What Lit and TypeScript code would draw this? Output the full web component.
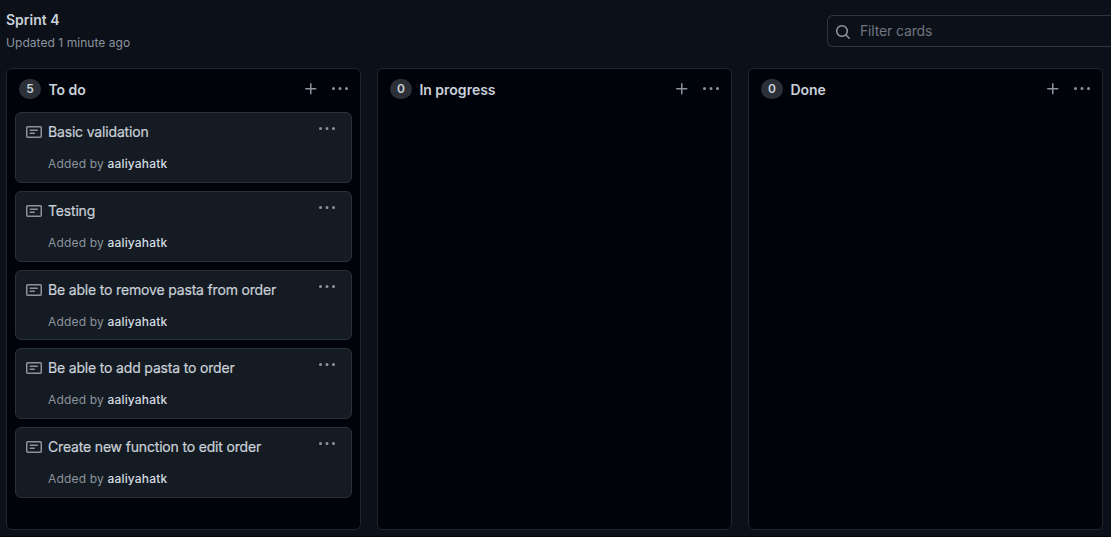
import { LitElement, html, css, svg } from "lit";
import { customElement, property } from "lit/decorators.js";

const PLUS = svg`<path d="M7.75 2a.75.75 0 01.75.75V7h4.25a.75.75 0 110 1.5H8.5v4.25a.75.75 0 11-1.5 0V8.5H2.75a.75.75 0 010-1.5H7V2.75A.75.75 0 017.75 2z"/>`;
const KEBAB = svg`<path d="M8 9a1.5 1.5 0 100-3 1.5 1.5 0 000 3zM1.5 9a1.5 1.5 0 100-3 1.5 1.5 0 000 3zm13 0a1.5 1.5 0 100-3 1.5 1.5 0 000 3z"/>`;
const NOTE = svg`<path fill-rule="evenodd" d="M0 3.75C0 2.784.784 2 1.75 2h12.5c.966 0 1.75.784 1.75 1.75v8.5A1.75 1.75 0 0114.25 14H1.75A1.75 1.75 0 010 12.25v-8.5zm1.75-.25a.25.25 0 00-.25.25v8.5c0 .138.112.25.25.25h12.5a.25.25 0 00.25-.25v-8.5a.25.25 0 00-.25-.25H1.75zM3.5 6.25a.75.75 0 01.75-.75h7a.75.75 0 010 1.5h-7a.75.75 0 01-.75-.75zm.75 2.25a.75.75 0 000 1.5h4a.75.75 0 000-1.5h-4z"/>`;
const SEARCH = svg`<path fill-rule="evenodd" d="M11.5 7a4.499 4.499 0 11-8.998 0A4.499 4.499 0 0111.5 7zm-.82 4.74a6 6 0 111.06-1.06l3.04 3.04a.75.75 0 11-1.06 1.06l-3.04-3.04z"/>`;

const icon = (shape: unknown) =>
  html`<svg class="icon" viewBox="0 0 16 16" width="16" height="16" aria-hidden="true">${shape}</svg>`;

const shared = css`
  * {
    box-sizing: border-box;
  }
  .icon {
    display: block;
    flex: none;
    fill: #8b949e;
  }
  button {
    display: block;
    padding: 0;
    border: 0;
    background: none;
  }
`;

@customElement("board-card")
export class BoardCard extends LitElement {
  @property() title = "";
  @property() author = "";

  static styles = [
    shared,
    css`
      :host {
        display: block;
      }
      .card {
        display: flex;
        height: 70.75px;
        padding: 8px 16px 0 10px;
        border: 1px solid #2b3138;
        border-radius: 6px;
        background: #151b22;
      }
      .note {
        padding-top: 3px;
      }
      .body {
        flex: 1;
        padding-left: 6px;
      }
      .name {
        font-size: 14px;
        line-height: 21px;
        letter-spacing: -0.17px;
        color: #c9d1d9;
        white-space: nowrap;
        -webkit-text-stroke: 0.2px #c9d1d9;
      }
      .by {
        margin-top: 13px;
        font-size: 12px;
        line-height: 18px;
        letter-spacing: 0.17px;
        color: #8b949e;
      }
      .author {
        color: #d3dae2;
        font-weight: 500;
      }
    `,
  ];

  render() {
    return html`<article class="card">
      <span class="note">${icon(NOTE)}</span>
      <div class="body">
        <div class="name">${this.title}</div>
        <div class="by">Added by <span class="author">${this.author}</span></div>
      </div>
      <div><button aria-label="Card menu">${icon(KEBAB)}</button></div>
    </article>`;
  }
}

@customElement("board-column")
export class BoardColumn extends LitElement {
  @property() name = "";
  @property({ attribute: false }) cards: string[] = [];

  static styles = [
    shared,
    css`
      :host {
        display: block;
      }
      .column {
        height: 462px;
        border: 1px solid #21262d;
        border-radius: 6px;
        background: #01030b;
      }
      .head {
        display: flex;
        align-items: center;
        height: 43px;
        padding: 0 12px;
      }
      .count {
        width: 22px;
        height: 20px;
        margin-top: -3px;
        border-radius: 10px;
        background: #2b2f37;
        color: #c9d1d9;
        font-size: 12px;
        font-weight: 600;
        line-height: 20px;
        text-align: center;
      }
      .name {
        flex: 1;
        margin: -2px 0 0 7.4px;
        color: #c9d1d9;
        font-size: 14px;
        font-weight: 600;
        line-height: 21px;
      }
      .tools {
        display: flex;
        gap: 13px;
        margin-top: -4px;
      }
      .list {
        display: flex;
        flex-direction: column;
        gap: 8px;
        padding: 0 8px;
      }
    `,
  ];

  render() {
    return html`<section class="column">
      <header class="head">
        <span class="count">${this.cards.length}</span>
        <h3 class="name">${this.name}</h3>
        <div class="tools">
          <button aria-label="Add a note">${icon(PLUS)}</button>
          <button aria-label="Column menu">${icon(KEBAB)}</button>
        </div>
      </header>
      <div class="list">
        ${this.cards.map((c) => html`<board-card .title=${c} .author=${"aaliyahatk"}></board-card>`)}
      </div>
    </section>`;
  }
}

@customElement("app-root")
export class AppRoot extends LitElement {
  static styles = [
    shared,
    css`
      :host {
        display: block;
        height: 537px;
        overflow: hidden;
        background: #0c1018;
        border-bottom: 1px solid #01030b;
        box-sizing: border-box;
        font-family: Inter, "Liberation Sans", sans-serif;
      }
      .top {
        display: flex;
        justify-content: space-between;
        height: 68px;
        padding-left: 6px;
      }
      .title {
        margin: 0;
        padding-top: 9px;
        color: #c9d1d9;
        font-size: 14px;
        font-weight: 600;
        line-height: 21px;
      }
      .updated {
        margin-top: 4px;
        color: #8b949e;
        font-size: 12px;
        line-height: 18px;
        letter-spacing: 0.05px;
      }
      .filter {
        display: flex;
        align-items: center;
        gap: 9px;
        width: 284px;
        height: 32px;
        margin-top: 15px;
        padding-left: 7px;
        border: 1px solid #30363d;
        border-right: 0;
        border-radius: 6px 0 0 6px;
      }
      .hint {
        color: #6e7681;
        font-size: 14px;
        line-height: 20px;
        letter-spacing: -0.15px;
      }
      .glass {
        padding-top: 2px;
      }
      .board {
        display: grid;
        grid-template-columns: repeat(3, 355px);
        gap: 16px;
        padding-left: 6px;
      }
    `,
  ];

  private columns = [
    {
      name: "To do",
      cards: [
        "Basic validation",
        "Testing",
        "Be able to remove pasta from order",
        "Be able to add pasta to order",
        "Create new function to edit order",
      ],
    },
    { name: "In progress", cards: [] },
    { name: "Done", cards: [] },
  ];

  render() {
    return html`
      <header class="top">
        <div>
          <h2 class="title">Sprint 4</h2>
          <div class="updated">Updated 1 minute ago</div>
        </div>
        <div class="filter">
          <span class="glass">${icon(SEARCH)}</span>
          <span class="hint">Filter cards</span>
        </div>
      </header>
      <main class="board">
        ${this.columns.map((c) => html`<board-column .name=${c.name} .cards=${c.cards}></board-column>`)}
      </main>
    `;
  }
}
